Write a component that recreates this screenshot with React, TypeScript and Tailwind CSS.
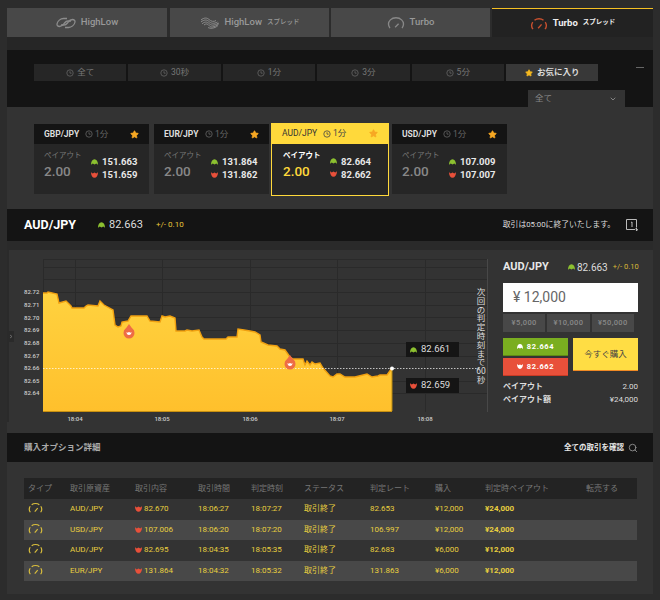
import { Star, ChevronDown, Search } from "lucide-react";

const Clock = ({ className = "" }: { className?: string }) => (
  <svg viewBox="0 0 10 10" className={`w-[8px] h-[8px] ${className}`} fill="none" stroke="currentColor" strokeWidth="1">
    <circle cx="5" cy="5" r="4" />
    <path d="M5 2.800V5.200H7" />
  </svg>
);

const Up = ({ className = "" }: { className?: string }) => (
  <svg viewBox="0 0 10 8" className={`w-[7px] h-[6px] ${className}`} fill="#8cc030">
    <path d="M0 8C0 3 2 0 5 0s5 3 5 8L7.500 6 5 7.500 2.500 6z" />
  </svg>
);

const Down = ({ className = "" }: { className?: string }) => (
  <svg viewBox="0 0 10 8" className={`w-[7px] h-[6px] ${className}`} fill="#e8503a">
    <path d="M0 0c0 5 2 8 5 8s5-3 5-8L7.500 2 5 .5 2.500 2z" />
  </svg>
);

// plain arc, used on the Turbo tab
const Gauge = ({ className = "" }: { className?: string }) => (
  <svg viewBox="0 0 20 15" className={className} fill="none" stroke="currentColor" strokeWidth="1.500">
    <path d="M3 14C1 11 1 7 3.500 4.500 5 3 7 2 10 2s5 1 6.500 2.500C19 7 19 11 17 14" />
    <path d="M9 13l4-4" />
  </svg>
);

// broken arc, used on Turbo スプレッド and the table rows
const GaugeSplit = ({ className = "" }: { className?: string }) => (
  <svg viewBox="0 0 20 15" className={className} fill="none" stroke="currentColor" strokeWidth="1.600">
    <path d="M3 14C1.200 11.500 1 8.500 2.800 5.800" />
    <path d="M4.800 3.800C6.200 2.600 8 2 10 2s3.800.6 5.200 1.800" />
    <path d="M17.200 5.800C19 8.500 18.800 11.500 17 14" />
    <path d="M9 13l4-4.500" />
  </svg>
);

const HighLowIcon = () => (
  <svg viewBox="0 0 20 12" className="w-[20px] h-[12px]" fill="none" stroke="#8c8c8c" strokeWidth="1.300">
    <path d="M11 1.500H7.500C4.500 1.500 1.500 4 1 7c-.2 1.500.8 2.500 2.500 2.500 2.500 0 3.500-1.500 5-3.500 1-1.300 2-2 3.500-2h3" />
    <path d="M9 10.500h3.500c3 0 6-2.500 6.500-5.500.2-1.500-.8-2.500-2.500-2.500-2.500 0-3.500 1.500-5 3.500-1 1.300-2 2-3.500 2h-3" />
  </svg>
);

const SpreadIcon = () => (
  <svg viewBox="0 0 20 12" className="w-[20px] h-[12px]" fill="none" stroke="#8c8c8c" strokeWidth="1">
    <path d="M1 3C4 .5 7 .5 9 2.500s5 2.500 7 1" />
    <path d="M1 5C4 2.500 7 2.500 9 4.500s5 2.500 8.500 .5" />
    <path d="M2 7C4.500 4.500 7 4.500 9 6.500s5 2.500 9.500-.5" />
    <path d="M4 8C6 6.500 7.500 6.500 9 8.500s5 2.500 10-2" />
    <path d="M8 10.500c2 1 6 1.500 10-2" />
  </svg>
);

const filters = ["全て", "30秒", "1分", "3分", "5分"];

const cards = [
  { pair: "GBP/JPY", up: "151.663", down: "151.659" },
  { pair: "EUR/JPY", up: "131.864", down: "131.862" },
  { pair: "AUD/JPY", up: "82.664", down: "82.662", active: true },
  { pair: "USD/JPY", up: "107.009", down: "107.007" },
];

const rows = [
  ["AUD/JPY", "82.670", "18:06:27", "18:07:27", "82.653", "¥12,000", "¥24,000"],
  ["USD/JPY", "107.006", "18:06:20", "18:07:20", "106.997", "¥12,000", "¥24,000"],
  ["AUD/JPY", "82.695", "18:04:35", "18:05:35", "82.683", "¥6,000", "¥12,000"],
  ["EUR/JPY", "131.864", "18:04:32", "18:05:32", "131.863", "¥6,000", "¥12,000"],
];

const heads = ["タイプ", "取引原資産", "取引内容", "取引時間", "判定時刻", "ステータス", "判定レート", "購入", "判定時ペイアウト", "転売する"];
const colWidths = [46, 65, 63, 53, 53, 66, 65, 50, 101, 51];

const area =
  "M43 293L47 293L48 292L57 294L59 303L66 301L71 306L72 308L84 308L86 306L88 305L98 306L100 301L104 305L113 310L115 325L118 327L121 326L122 322L128 321L131 316L147 316L150 321L160 322L162 316L165 317L170 316L175 318L176 331L185 331L187 330L192 331L199 330L202 337L204 339L226 339L228 337L237 337L238 329L244 330L250 331L255 332L260 335L261 342L268 345L277 346L280 349L285 350L290 357L293 359L303 359L305 365L307 361L310 365L312 362L315 364L320 363L323 368L330 376L333 377L337 374L340 374L345 377L355 377L367 374L372 377L378 376L380 375L387 375L392 368";

const Chart = () => (
  <div className="relative w-[483px] h-[183px] shrink-0">
    <svg viewBox="7 250 483 183" className="w-[483px] h-[183px] block">
      <defs>
        <linearGradient id="fill" x1="0" y1="0" x2="0" y2="1">
          <stop offset="0" stopColor="#ffd23f" />
          <stop offset="1" stopColor="#ffc02c" />
        </linearGradient>
      </defs>
      <rect x="7" y="250" width="2" height="172" fill="#2a2a2a" />
      <rect x="8" y="331" width="6" height="11" fill="#2a2a2a" />
      <path d="M10 335l2 1.500-2 1.500" stroke="#777" fill="none" strokeWidth="0.800" />
      <g stroke="#2a2a2a" strokeWidth="1">
        {[259, 267, 279, 292, 305, 317, 330, 343, 356, 381, 393].map((y) => (
          <line key={y} x1="43" x2="487" y1={y + 0.5} y2={y + 0.5} />
        ))}
        {[75, 162, 250, 337, 425].map((x) => (
          <line key={x} x1={x + 0.5} x2={x + 0.5} y1="259" y2="412" />
        ))}
        <line x1="43.500" x2="43.500" y1="259" y2="412" />
      </g>
      <line x1="487.500" x2="487.500" y1="259" y2="412" stroke="#484848" />
      <path d={`${area}L392 411L43 411Z`} fill="url(#fill)" />
      <path d={area} fill="none" stroke="#f0a010" strokeWidth="1.400" />
      <line x1="43" x2="392" y1="411.500" y2="411.500" stroke="#c89010" />
      <line x1="392" x2="392" y1="368" y2="411" stroke="#b88a10" />
      <line x1="43" x2="480" y1="368.500" y2="368.500" stroke="#fff" strokeOpacity="0.700" strokeDasharray="1.500 1.500" />
      <circle cx="392" cy="368.500" r="2" fill="#fff" />
      {[
        [129, 333],
        [290, 364],
      ].map(([x, y]) => (
        <g key={x}>
          <path d={`M${x} ${y - 9}L${x + 5} ${y - 2}L${x - 5} ${y - 2}Z`} fill="#ee6c45" />
          <circle cx={x} cy={y} r="5.500" fill="#ee6c45" />
          <path d={`M${x - 2.5} ${y - 1}c0 2 1 3 2.500 3s2.500-1 2.500-3l-1 .7-1.500-.7-1.500.7z`} fill="#fff" />
        </g>
      ))}
      <g fill="#ccc" fontSize="6" fontWeight="500">
        {[
          ["82.72", 294],
          ["82.71", 307],
          ["82.70", 320],
          ["82.69", 332],
          ["82.68", 345],
          ["82.67", 358],
          ["82.66", 370],
          ["82.65", 383],
          ["82.64", 395],
        ].map(([t, y]) => (
          <text key={t} x="24" y={y}>
            {t}
          </text>
        ))}
        {[
          ["18:04", 75],
          ["18:05", 162],
          ["18:06", 250],
          ["18:07", 337],
          ["18:08", 425],
        ].map(([t, x]) => (
          <text key={t} x={x} y="421" textAnchor="middle">
            {t}
          </text>
        ))}
      </g>
    </svg>
    <div className="absolute left-[399px] top-[92px] w-[53px] h-[15px] bg-[#151515] flex items-center pl-[4px] gap-[4px] text-[9.500px] text-[#ddd]">
      <Up />
      82.661
    </div>
    <div className="absolute left-[399px] top-[128px] w-[53px] h-[15px] bg-[#151515] flex items-center pl-[4px] gap-[4px] text-[9.500px] text-[#ddd]">
      <Down />
      82.659
    </div>
    <div className="absolute left-[468px] top-[38px] w-[12px] flex flex-col items-center text-[8.500px] leading-[8.800px] text-[#ddd]">
      {["次", "回", "の", "判", "定", "時", "刻", "ま", "で", "60", "秒"].map((c) => (
        <span key={c}>{c}</span>
      ))}
    </div>
  </div>
);

const Card = ({ pair, up, down, active }: { pair: string; up: string; down: string; active?: boolean }) => (
  <div
    className={
      active
        ? "w-[118px] h-[73px] border border-[#ffd93b] bg-[#262626] shrink-0"
        : "w-[115px] h-[70px] bg-[#262626] shrink-0"
    }
  >
    <div
      className={`h-[20px] flex items-center px-[10px] text-[8.500px] ${
        active ? "bg-[#ffd93b] text-[#333]" : "bg-[#141414] text-[#ddd] font-bold"
      }`}
    >
      <span className="w-[33px] whitespace-nowrap">{pair}</span>
      <Clock className={`ml-[8px] ${active ? "text-[#444]" : "text-[#666]"}`} />
      <span className={`ml-[2px] ${active ? "text-[#444]" : "text-[#666] font-normal"}`}>1分</span>
      <Star className="ml-auto w-[9px] h-[9px] text-[#f7a823] fill-[#f7a823]" />
    </div>
    <div className={`flex pt-[6px] ${active ? "pl-[11px]" : "pl-[10px]"}`}>
      <div className="w-[47px]">
        <div className={`text-[7.500px] leading-[12px] ${active ? "text-white font-bold" : "text-[#777]"}`}>ペイアウト</div>
        <div className={`text-[13.500px] leading-[18px] font-medium ${active ? "text-[#ffd93b]" : "text-[#888]"}`}>2.00</div>
      </div>
      <div className="pt-[5px] text-[9.500px] leading-[13px] font-bold text-[#e8e8e8]">
        <div className="flex items-center gap-[4px]">
          <Up />
          {up}
        </div>
        <div className="flex items-center gap-[4px]">
          <Down />
          {down}
        </div>
      </div>
    </div>
  </div>
);

const App = () => {
  return (
    <div className="w-[660px] h-[600px] overflow-hidden bg-[#2c2c2c] pl-[7px] pt-[8px] text-white [font-family:Roboto,'Noto_Sans_CJK_JP',sans-serif]">
      <div className="w-[646px]">
        <div className="flex h-[29px]">
          <div className="w-[160px] mr-[3px] bg-[#484848] flex items-center justify-center gap-[5px] text-[9.500px] font-medium text-[#999]">
            <HighLowIcon />
            HighLow
          </div>
          <div className="w-[159px] mr-[2px] bg-[#484848] flex items-center justify-center gap-[5px] text-[9.500px] font-medium text-[#999]">
            <SpreadIcon />
            <span>HighLow</span>
            <span className="text-[6.500px]">スプレッド</span>
          </div>
          <div className="w-[159px] mr-[2px] bg-[#484848] flex items-center justify-center gap-[5px] text-[9.500px] font-medium text-[#999]">
            <Gauge className="w-[18px] h-[13px] text-[#888]" />
            Turbo
          </div>
          <div className="flex-1 bg-[#222] border-t border-[#f5c023] flex items-center justify-center gap-[5px] text-[9.500px] text-[#eee] font-bold">
            <GaugeSplit className="w-[18px] h-[13px] text-[#c8502f]" />
            <span>Turbo</span>
            <span className="text-[6.500px]">スプレッド</span>
          </div>
        </div>

        <div className="h-[13px] bg-[#262626]" />

        <div className="relative h-[57px] bg-[#141414] pt-[14px] pl-[27px]">
          <div className="flex gap-[2px]">
            {filters.map((f) => (
              <div key={f} className="w-[92.400px] h-[17px] bg-[#262626] flex items-center justify-center gap-[3px] text-[8.500px] text-[#777]">
                <Clock className="text-[#666]" />
                {f}
              </div>
            ))}
            <div className="w-[92.400px] h-[17px] bg-[#383838] flex items-center justify-center gap-[4px] text-[8.500px] font-bold text-[#ddd]">
              <Star className="w-[8px] h-[8px] text-[#f5b921] fill-[#f5b921]" />
              お気に入り
            </div>
          </div>
          <div className="absolute right-[9px] top-[17px] w-[8px] h-px bg-[#666]" />
          <div className="ml-[494px] mt-[9px] w-[97px] h-[17px] bg-[#333] flex items-center justify-between pl-[7px] pr-[8px] text-[8.500px] text-[#888]">
            全て
            <ChevronDown className="w-[8px] h-[8px] text-[#aaa]" />
          </div>
        </div>

        <div className="h-[102px] bg-[#333] pl-[27px] pt-[2px] flex items-center">
          <div className="flex items-center">
            {cards.map((c, i) => (
              <div key={c.pair} className={i === 0 ? "mr-[5px]" : i === 1 ? "mr-[2px]" : i === 2 ? "mr-[3px]" : ""}>
                <Card {...c} />
              </div>
            ))}
          </div>
        </div>

        <div className="h-[32px] bg-[#141414] flex items-center pl-[17px] pr-[15px]">
          <span className="w-[74px] text-[12.500px] font-bold">AUD/JPY</span>
          <Up />
          <span className="ml-[4px] w-[47px] text-[11px] text-[#ddd]">82.663</span>
          <span className="text-[8px] text-[#e8c63a]">+/- 0.10</span>
          <span className="ml-auto mr-[11px] text-[7.800px] text-[#ddd]">取引は05:00に終了いたします。</span>
          <svg viewBox="0 0 12 13" className="w-[12px] h-[13px]" fill="none" stroke="#bbb" strokeWidth="1">
            <path d="M9 10.500H.5V.5h10v8" />
            <path d="M5 3.500l1-.5v5" />
            <path d="M10 9l.5 3 1-1.500z" fill="#bbb" />
          </svg>
        </div>

        <div className="h-[9px] bg-[#2a2a2a]" />

        <div className="h-[183px] bg-[#333] flex">
          <Chart />
          <div className="w-[148px] pl-[13px] pt-[10px]">
            <div className="flex items-center h-[14px] w-[140px] whitespace-nowrap">
              <span className="w-[65px] text-[11px] font-bold text-[#e8e8e8]">AUD/JPY</span>
              <Up />
              <span className="ml-[2px] text-[10px] text-[#ddd]">82.663</span>
              <span className="ml-[5px] text-[7.500px] text-[#d8b838]">+/- 0.10</span>
            </div>
            <div className="mt-[9px] w-[135px] h-[29px] bg-white flex items-center pl-[10px] text-[14px] text-[#666]">¥ 12,000</div>
            <div className="mt-[2px] flex gap-[2px] w-[131px]">
              {["¥5,000", "¥10,000", "¥50,000"].map((a) => (
                <div key={a} className="flex-1 h-[18px] bg-[#484848] flex items-center justify-center text-[7.500px] tracking-[0.4px] font-medium text-[#888]">
                  {a}
                </div>
              ))}
            </div>
            <div className="mt-[6px] flex w-[135px] justify-between items-start">
              <div className="w-[65px]">
                <div className="h-[18px] bg-[#7aae20] border-b border-[#5f8a15] flex items-center justify-center gap-[4px] text-[7.500px] tracking-[0.6px] font-bold">
                  <svg viewBox="0 0 10 8" className="w-[6px] h-[5px]" fill="#fff">
                    <path d="M0 8C0 3 2 0 5 0s5 3 5 8L7.500 6 5 7.500 2.500 6z" />
                  </svg>
                  82.664
                </div>
                <div className="mt-[2px] h-[18px] bg-[#e8503a] border-b border-[#c83a25] flex items-center justify-center gap-[4px] text-[7.500px] tracking-[0.6px] font-bold">
                  <svg viewBox="0 0 10 8" className="w-[6px] h-[5px]" fill="#fff">
                    <path d="M0 0c0 5 2 8 5 8s5-3 5-8L7.500 2 5 .5 2.500 2z" />
                  </svg>
                  82.662
                </div>
              </div>
              <div className="w-[65px] h-[33px] bg-[#ffdd44] border-b border-[#f08a24] flex items-center justify-center text-[8.500px] text-[#444]">
                今すぐ購入
              </div>
            </div>
            <div className="mt-[4px] w-[135px] text-[8px] leading-[13px] text-[#ddd]">
              <div className="flex justify-between">
                <span className="font-bold">ペイアウト</span>
                <span>2.00</span>
              </div>
              <div className="flex justify-between">
                <span className="font-bold">ペイアウト額</span>
                <span>¥24,000</span>
              </div>
            </div>
          </div>
        </div>

        <div className="h-[29px] bg-[#141414] flex items-center pl-[17px] pr-[15px]">
          <span className="text-[8.500px] font-bold text-[#aaa]">購入オプション詳細</span>
          <span className="ml-auto mr-[4px] text-[7.500px] font-bold text-[#e8e8e8]">全ての取引を確認</span>
          <Search className="w-[10px] h-[10px] text-[#999]" />
        </div>

        <div className="h-[132px] bg-[#333] pt-[16px] pl-[17px]">
          <table className="w-[613px] table-fixed border-collapse text-[8px]">
            <colgroup>
              {colWidths.map((w, i) => (
                <col key={i} style={{ width: w }} />
              ))}
            </colgroup>
            <thead>
              <tr className="h-[21px] bg-[#232323] text-[#777] text-left">
                {heads.map((h, i) => (
                  <th key={h} className={`font-normal whitespace-nowrap ${i === 0 ? "pl-[4px]" : ""}`}>
                    {h}
                  </th>
                ))}
              </tr>
            </thead>
            <tbody className="text-[#e8cf3f]">
              {rows.map((r, i) => (
                <tr key={i} className={`h-[20.600px] ${i % 2 ? "bg-[#484848]" : "bg-[#333]"}`}>
                  <td className="pl-[4px]">
                    <GaugeSplit className="w-[15px] h-[11px] -mt-[3px] text-[#d8bd3c]" />
                  </td>
                  <td>{r[0]}</td>
                  <td>
                    <span className="flex items-center gap-[2px]">
                      <Down className="w-[6px] h-[5px]" />
                      {r[1]}
                    </span>
                  </td>
                  <td>{r[2]}</td>
                  <td>{r[3]}</td>
                  <td>取引終了</td>
                  <td>{r[4]}</td>
                  <td>{r[5]}</td>
                  <td className="font-bold">{r[6]}</td>
                  <td />
                </tr>
              ))}
            </tbody>
          </table>
        </div>
      </div>
    </div>
  );
};

export default App;
